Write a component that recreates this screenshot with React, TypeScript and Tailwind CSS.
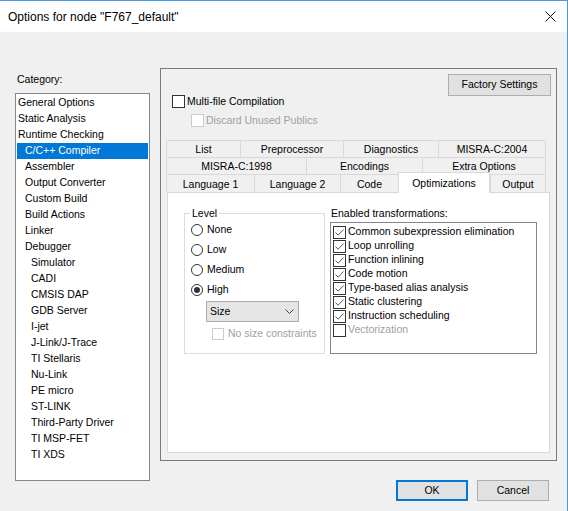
import React from 'react';

const CATEGORIES: { label: string; level: 0 | 1 | 2; selected?: boolean }[] = [
  { label: 'General Options', level: 0 },
  { label: 'Static Analysis', level: 0 },
  { label: 'Runtime Checking', level: 0 },
  { label: 'C/C++ Compiler', level: 1, selected: true },
  { label: 'Assembler', level: 1 },
  { label: 'Output Converter', level: 1 },
  { label: 'Custom Build', level: 1 },
  { label: 'Build Actions', level: 1 },
  { label: 'Linker', level: 1 },
  { label: 'Debugger', level: 1 },
  { label: 'Simulator', level: 2 },
  { label: 'CADI', level: 2 },
  { label: 'CMSIS DAP', level: 2 },
  { label: 'GDB Server', level: 2 },
  { label: 'I-jet', level: 2 },
  { label: 'J-Link/J-Trace', level: 2 },
  { label: 'TI Stellaris', level: 2 },
  { label: 'Nu-Link', level: 2 },
  { label: 'PE micro', level: 2 },
  { label: 'ST-LINK', level: 2 },
  { label: 'Third-Party Driver', level: 2 },
  { label: 'TI MSP-FET', level: 2 },
  { label: 'TI XDS', level: 2 },
];

const INDENT = ['pl-[2px]', 'pl-[9px]', 'pl-[15px]'];

const TAB_ROWS: { label: string; w: number; active?: boolean }[][] = [
  [
    { label: 'List', w: 74 },
    { label: 'Preprocessor', w: 103 },
    { label: 'Diagnostics', w: 95 },
    { label: 'MISRA-C:2004', w: 108 },
  ],
  [
    { label: 'MISRA-C:1998', w: 140 },
    { label: 'Encodings', w: 116 },
    { label: 'Extra Options', w: 124 },
  ],
  [
    { label: 'Language 1', w: 88 },
    { label: 'Language 2', w: 86 },
    { label: 'Code', w: 58 },
    { label: 'Optimizations', w: 92, active: true },
    { label: 'Output', w: 56 },
  ],
];

const TRANSFORMS = [
  { label: 'Common subexpression elimination', on: true },
  { label: 'Loop unrolling', on: true },
  { label: 'Function inlining', on: true },
  { label: 'Code motion', on: true },
  { label: 'Type-based alias analysis', on: true },
  { label: 'Static clustering', on: true },
  { label: 'Instruction scheduling', on: true },
  { label: 'Vectorization', on: false, disabled: true },
];

function CheckBox({ checked, disabled }: { checked?: boolean; disabled?: boolean }) {
  return (
    <span
      className={
        'flex h-[13px] w-[13px] flex-shrink-0 items-center justify-center border bg-white ' +
        (disabled ? 'border-[#cccccc]' : 'border-[#333333]')
      }
    >
      {checked && (
        <svg width="11" height="11" viewBox="0 0 11 11" fill="none">
          <path d="M1.5 5.5 L4.2 8.2 L9.5 2.5" stroke="#444444" strokeWidth="0.9" />
        </svg>
      )}
    </span>
  );
}

function Radio({ checked }: { checked?: boolean }) {
  return (
    <span className="flex h-[12px] w-[12px] flex-shrink-0 items-center justify-center rounded-full border border-[#333333] bg-white">
      {checked && <span className="h-[6px] w-[6px] rounded-full bg-[#333333]" />}
    </span>
  );
}

export default function App() {
  return (
    <div className="h-[511px] w-[568px] overflow-hidden border-t border-r border-[#4a9ae0] bg-[#f0f0f0] font-['Liberation_Sans',Arial,sans-serif] text-[10.5px] text-black">
      {/* Title bar */}
      <div className="flex h-[31px] items-center justify-between bg-white pl-[8px] pr-[11px]">
        <span className="text-[12px]">Options for node "F767_default"</span>
        <svg width="11" height="11" viewBox="0 0 11 11" fill="none">
          <path d="M0.5 0.5 L10.5 10.5 M10.5 0.5 L0.5 10.5" stroke="#111111" strokeWidth="1" />
        </svg>
      </div>

      <div className="flex">
        {/* Category list */}
        <div className="w-[160px] flex-shrink-0 pl-[15px] pt-[40px]">
          <div className="h-[14px] pl-[2px] leading-[14px]">Category:</div>
          <div className="mt-[7px] h-[388px] w-[135px] border border-[#828790] bg-white pt-[1px]">
            {CATEGORIES.map((c) => (
              <div
                key={c.label}
                className={
                  'flex h-[16px] items-center ' +
                  INDENT[c.level] +
                  (c.selected ? ' mx-[1px] bg-[#0078d7] text-white' : '')
                }
              >
                <span className={c.selected ? '-ml-[1px]' : ''}>{c.label}</span>
              </div>
            ))}
          </div>
        </div>

        {/* Right side */}
        <div className="w-[397px] pt-[36px]">
          <div className="flex h-[393px] w-[397px] flex-col border border-[#7a7a7a]">
            <div className="flex justify-end pr-[5px] pt-[5px]">
              <button className="h-[22px] w-[103px] border border-[#adadad] bg-[#e1e1e1]">
                Factory Settings
              </button>
            </div>

            <div className="-mt-px flex h-[13px] items-center pl-[11px]">
              <CheckBox />
              <span className="ml-[2px]">Multi-file Compilation</span>
            </div>
            <div className="mt-[6px] flex h-[13px] items-center pl-[30px]">
              <CheckBox disabled />
              <span className="ml-[2px] text-[#a0a0a0]">Discard Unused Publics</span>
            </div>

            {/* Tabs */}
            <div className="ml-[5px] mt-[13px] w-[380px]">
              {TAB_ROWS.map((row, i) => (
                <div key={i} className={'flex ' + (i === 2 ? 'h-[18px]' : 'h-[17px]')}>
                  {row.map((t, j) =>
                    t.active ? (
                      <div
                        key={t.label}
                        style={{ width: t.w }}
                        className="relative z-10 -mt-[2px] flex h-[21px] items-start justify-center border border-b-0 border-[#d9d9d9] bg-white pt-[3px]"
                      >
                        {t.label}
                      </div>
                    ) : (
                      <div
                        key={t.label}
                        style={{ width: t.w }}
                        className={
                          'flex items-center justify-center border-t border-l border-[#d9d9d9] pt-[2px]' +
                          (j === row.length - 1 ? ' border-r' : '')
                        }
                      >
                        {t.label}
                      </div>
                    )
                  )}
                </div>
              ))}
            </div>

            {/* Tab page */}
            <div className="ml-[6px] flex h-[261px] w-[383px] border border-[#d9d9d9] bg-white pl-[16px] pt-[13px]">
              <fieldset className="h-[148px] w-[141px] flex-shrink-0 border border-[#dcdcdc]">
                <legend className="ml-[5px] px-[2px] leading-[14px]">Level</legend>
                {['None', 'Low', 'Medium', 'High'].map((l) => (
                  <div key={l} className="flex h-[20px] items-center pl-[6px]">
                    <Radio checked={l === 'High'} />
                    <span className="ml-[4px]">{l}</span>
                  </div>
                ))}
                <div className="ml-[21px] mt-[1px] flex h-[21px] w-[93px] items-center justify-between border border-[#acacac] bg-[#e5e5e5] pl-[3px] pr-[4px]">
                  <span>Size</span>
                  <svg width="9" height="5" viewBox="0 0 9 5" fill="none">
                    <path d="M0.5 0.5 L4.5 4.5 L8.5 0.5" stroke="#444444" strokeWidth="1" />
                  </svg>
                </div>
                <div className="ml-[27px] mt-[6px] flex h-[12px] items-center">
                  <span className="h-[12px] w-[12px] border border-[#cccccc] bg-white" />
                  <span className="ml-[4px] text-[#a0a0a0]">No size constraints</span>
                </div>
              </fieldset>

              <div className="ml-[5px] flex flex-col">
                <div className="h-[14px] pl-[1px] leading-[14px]">Enabled transformations:</div>
                <div className="mt-[2px] h-[132px] w-[207px] border border-[#828790] bg-white pl-[2px] pt-[2px]">
                  {TRANSFORMS.map((t) => (
                    <div key={t.label} className="flex h-[14px] items-center">
                      <CheckBox checked={t.on} />
                      <span className={'ml-[2px] ' + (t.disabled ? 'text-[#a0a0a0]' : '')}>{t.label}</span>
                    </div>
                  ))}
                </div>
              </div>
            </div>
          </div>

          {/* Dialog buttons */}
          <div className="mt-[19px] flex justify-end gap-[9px] pr-[8px]">
            <button className="h-[21px] w-[72px] border-2 border-[#0078d7] bg-[#e1e1e1]">OK</button>
            <button className="h-[21px] w-[72px] border border-[#adadad] bg-[#e1e1e1]">Cancel</button>
          </div>
        </div>
      </div>
    </div>
  );
}
